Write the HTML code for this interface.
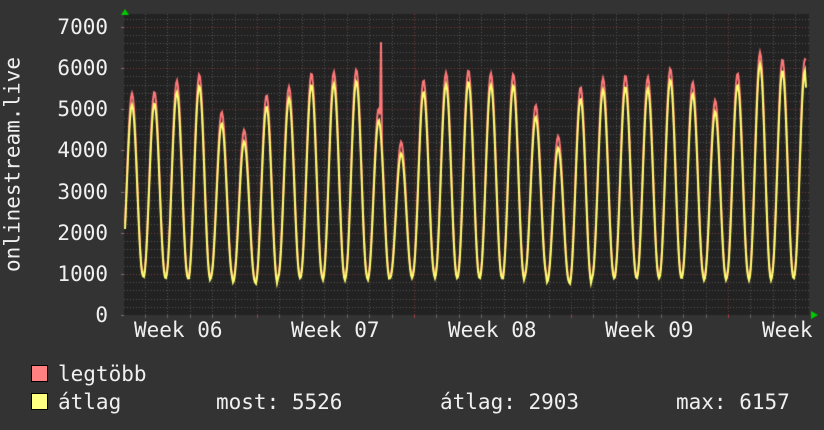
<!DOCTYPE html>
<html><head><meta charset="utf-8">
<style>
html,body{margin:0;padding:0;background:#333;}
#w{position:relative;width:824px;height:430px;overflow:hidden;background:#333;font-family:"DejaVu Sans Mono","Liberation Mono",monospace;color:#f0f0f0;font-size:21px;}
canvas{position:absolute;left:0;top:0;}
.t{position:absolute;white-space:pre;line-height:1;}
.yl{position:absolute;right:716px;text-align:right;line-height:1;}
.sq{position:absolute;width:15px;height:15px;border:1px solid #000;}
</style></head><body>
<div id="w">
<canvas id="c" width="824" height="430"></canvas>
<div class="yl" style="top:17px">7000</div>
<div class="yl" style="top:58px">6000</div>
<div class="yl" style="top:99px">5000</div>
<div class="yl" style="top:140px">4000</div>
<div class="yl" style="top:182px">3000</div>
<div class="yl" style="top:223px">2000</div>
<div class="yl" style="top:264px">1000</div>
<div class="yl" style="top:305px">0</div>
<div class="t" style="left:-97px;top:154px;transform:rotate(-90deg);width:220px;text-align:center;">onlinestream.live</div>
<div class="t" style="left:134px;top:320px">Week 06</div>
<div class="t" style="left:291px;top:320px">Week 07</div>
<div class="t" style="left:448px;top:320px">Week 08</div>
<div class="t" style="left:605px;top:320px">Week 09</div>
<div class="t" style="left:762px;top:320px">Week</div>
<div class="sq" style="left:31px;top:365px;background:#ff8080"></div>
<div class="sq" style="left:31px;top:393px;background:#ffff80"></div>
<div class="t" style="left:58px;top:364px">legtöbb</div>
<div class="t" style="left:58px;top:392px">átlag</div>
<div class="t" style="left:216px;top:392px">most: 5526</div>
<div class="t" style="left:440px;top:392px">átlag: 2903</div>
<div class="t" style="left:676px;top:392px">max: 6157</div>
</div>
<script>
var c=document.getElementById('c').getContext('2d');
var L=124,R=809,T=14,B=315,S=0.04114;
function Y(v){return B-v*S;}
c.fillStyle='#222';c.fillRect(L,T,R-L,B-T);
c.lineWidth=1;
c.setLineDash([1,2]);
for(var v=200;v<=7200;v+=200){var y=Math.round(Y(v))+0.5;c.strokeStyle=(v%1000==0)?'#7a3a3a':'#555';c.beginPath();c.moveTo(L,y);c.lineTo(R,y);c.stroke();}
for(var k=-6;k<30;k++){var x=257+k*22.43;if(x<L+2||x>R)continue;var xx=Math.round(x)+0.5;c.strokeStyle=(k%7==0)?'#7a3a3a':'#555';c.beginPath();c.moveTo(xx,T);c.lineTo(xx,B);c.stroke();}
c.setLineDash([]);
c.strokeStyle='#777';
for(var v=0;v<=7000;v+=1000){var y=Math.round(Y(v))+0.5;c.beginPath();c.moveTo(L-3,y);c.lineTo(L,y);c.stroke();}
for(var k=-6;k<30;k++){var x=257+k*22.43;if(x<L||x>R)continue;var xx=Math.round(x)+0.5;c.strokeStyle=(k%7==0)?'#a04040':'#666';c.beginPath();c.moveTo(xx,B);c.lineTo(xx,B+3);c.stroke();}
c.fillStyle='#0c0';
c.beginPath();c.moveTo(121,15);c.lineTo(129,15);c.lineTo(125,9);c.fill();
c.beginPath();c.moveTo(811,311);c.lineTo(811,319);c.lineTo(818,315);c.fill();
var H=[5390,5430,5700,5850,4940,4500,5350,5550,5880,5910,5970,5020,4210,5710,5890,5955,5880,5860,5100,4350,5540,5760,5830,5785,6000,5660,5225,5880,6390,6220,6220];
var TR=[1000,950,950,900,950,850,800,950,950,900,950,900,950,1000,950,950,950,900,1000,850,800,950,950,950,950,950,900,950,900,950,950];
function val(x,avg){var p=(x-132)/22.43;var k=Math.round(p);if(k<0)k=0;if(k>30)k=30;
 var f=(1+Math.cos(2*Math.PI*(p-Math.round(p))))/2;f=Math.pow(f,1.1);
 var h=H[k],t=TR[k];if(avg){h=h-280;t=t-60;}
 return t+(h-t)*f;}
function draw(col,avg){c.strokeStyle=col;c.lineWidth=2;c.beginPath();
 for(var x=125;x<=806;x+=1){var v=val(x,avg);if(!avg&&x==381)v=6630;if(x==806)v=avg?5526:6200;var y=Y(v);if(x==125)c.moveTo(x,y);else c.lineTo(x,y);}
 c.stroke();}
draw('#ff7878',false);
draw('#ffff70',true);
</script>
</body></html>
